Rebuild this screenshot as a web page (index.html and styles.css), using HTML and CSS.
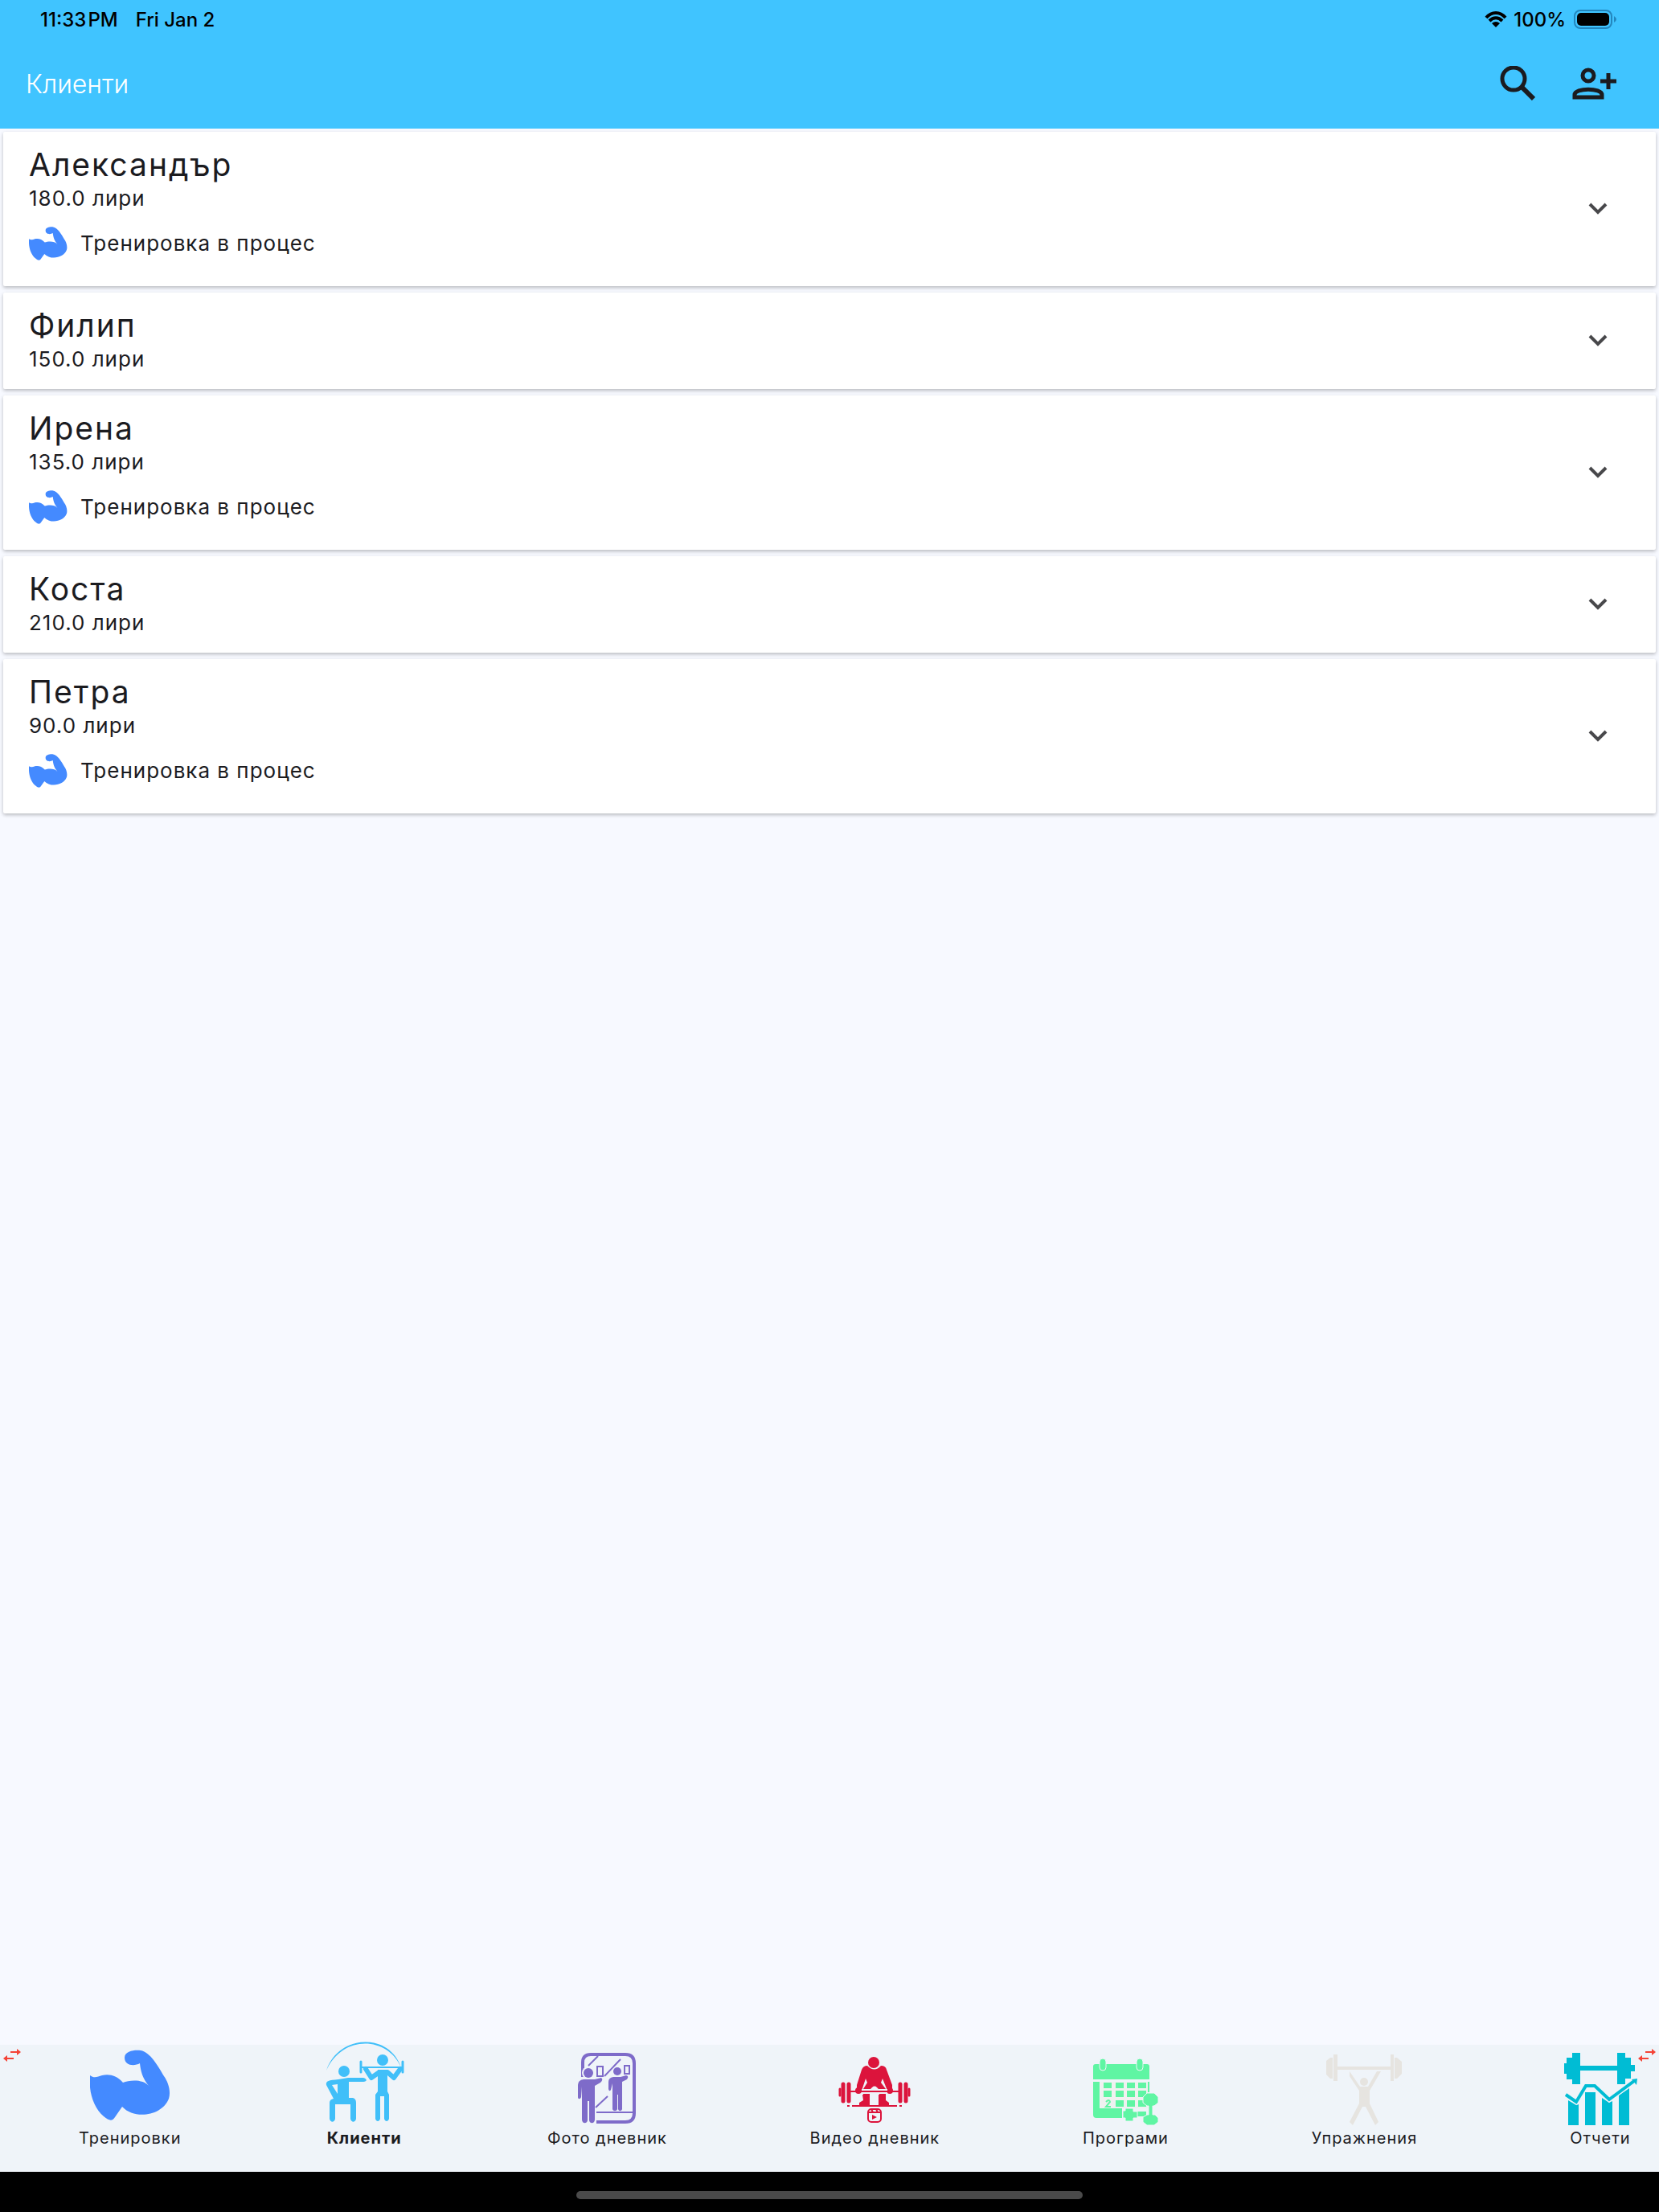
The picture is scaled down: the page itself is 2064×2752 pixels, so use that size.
FILE: index.html
```html
<!DOCTYPE html>
<html lang="bg">
<head>
  <meta charset="UTF-8">
  <meta name="viewport" content="width=device-width, initial-scale=1.0">
  <title>Клиенти</title>
  <link rel="stylesheet" href="styles.css">
</head>
<body>
  <svg class="sprite" aria-hidden="true">
    <symbol id="muscle" viewBox="0 0 100 88">
      <path d="M0 32C5 36 9 34 15 32C24 30 33 32 41 41C49 38 66 36 74 46C65 36 63 26 62 17C55 21 43 20 43 10C43 1 57 0 63 1C75 3 85 21 92 33C97 40 101 51 98 61C90 82 56 88 40 71L31 84C28 89 24 89 17 83C4 72-2 52 0 32Z"/>
    </symbol>
    <symbol id="chevron" viewBox="0 0 24 16">
      <path d="M2 2L12 12L22 2" fill="none" stroke="currentColor" stroke-width="4"/>
    </symbol>
    <symbol id="swap" viewBox="0 0 24 18">
      <path d="M10 5H20M14 13H4" fill="none" stroke="currentColor" stroke-width="2"/>
      <path d="M18 1L23 5L18 9ZM6 9L1 13L6 17Z"/>
    </symbol>
  </svg>

  <header class="header">
    <div class="status">
      <span class="time">11:33&#8202;PM</span>
      <span>Fri Jan 2</span>
      <svg class="wifi" viewBox="0 0 28 20">
        <path d="M2 8C9 0 19 0 26 8M6 12C11 7 17 7 22 12" fill="none" stroke="#000" stroke-width="4"/>
        <path d="M9 15Q14 11 19 15L14 20Z"/>
      </svg>
      <span class="percent">100%</span>
      <svg class="battery" viewBox="0 0 54 24">
        <rect x="1" y="1" width="46" height="22" rx="7" fill="none" stroke="#2386bd" stroke-width="2"/>
        <rect x="4" y="4" width="40" height="16" rx="5"/>
        <path d="M50 8Q56 12 50 16Z" fill="#2386bd"/>
      </svg>
    </div>
    <div class="toolbar">
      <h1>Клиенти</h1>
      <button class="tool" type="button" aria-label="Търсене">
        <svg class="search" viewBox="0 0 44 44">
          <circle cx="17" cy="16" r="14" fill="none" stroke="#1b1b1f" stroke-width="5"/>
          <path d="M28 27L42 41" stroke="#1b1b1f" stroke-width="6"/>
          <path d="M25 28L29 24L33 29L30 32Z"/>
        </svg>
      </button>
      <button class="tool" type="button" aria-label="Добавяне на клиент">
        <svg class="person" viewBox="0 0 56 42">
          <circle cx="20" cy="11" r="7" fill="none" stroke="#1b1b1f" stroke-width="5"/>
          <path d="M3 38V35C3 26 37 26 37 35V38ZM35 18H55M45 8V28" fill="none" stroke="#1b1b1f" stroke-width="5"/>
        </svg>
      </button>
    </div>
  </header>

  <main class="clients">
    <article class="card">
      <div class="info">
        <h2>Александър</h2>
        <p>180.0 лири</p>
        <p class="progress"><svg class="arm"><use href="#muscle"/></svg>Тренировка в процес</p>
      </div>
      <button class="expand" type="button" aria-label="Покажи"><svg><use href="#chevron"/></svg></button>
    </article>
    <article class="card">
      <div class="info">
        <h2>Филип</h2>
        <p>150.0 лири</p>
      </div>
      <button class="expand" type="button" aria-label="Покажи"><svg><use href="#chevron"/></svg></button>
    </article>
    <article class="card">
      <div class="info">
        <h2>Ирена</h2>
        <p>135.0 лири</p>
        <p class="progress"><svg class="arm"><use href="#muscle"/></svg>Тренировка в процес</p>
      </div>
      <button class="expand" type="button" aria-label="Покажи"><svg><use href="#chevron"/></svg></button>
    </article>
    <article class="card">
      <div class="info">
        <h2>Коста</h2>
        <p>210.0 лири</p>
      </div>
      <button class="expand" type="button" aria-label="Покажи"><svg><use href="#chevron"/></svg></button>
    </article>
    <article class="card">
      <div class="info">
        <h2>Петра</h2>
        <p>90.0 лири</p>
        <p class="progress"><svg class="arm"><use href="#muscle"/></svg>Тренировка в процес</p>
      </div>
      <button class="expand" type="button" aria-label="Покажи"><svg><use href="#chevron"/></svg></button>
    </article>
  </main>

  <nav class="tabs">
    <svg class="swap swap-left"><use href="#swap"/></svg>
    <a class="tab" href="#workouts">
      <svg class="blue" viewBox="0 0 100 104"><use href="#muscle" y="6" width="100" height="88"/></svg>
      Тренировки
    </a>
    <a class="tab active" href="#clients">
      <svg class="sky" viewBox="0 0 100 104">
        <path d="M3 32C18-13 81-16 96 28C79-11 23-13 3 32Z"/>
        <circle cx="25" cy="33" r="7"/>
        <circle cx="73" cy="19" r="7"/>
        <path d="M18 43L30 41H49C54 42 54 46 49 46H31V66H36Q40 67 40 72V92C39 97 34 97 33 92V74H14V92C13 97 8 97 7 92V72Q7 68 12 67L3 50C2 45 6 44 18 43ZM10 50L17 61V49Z"/>
        <path d="M46 21V34M98 21V34" stroke="currentColor" stroke-width="3" stroke-linecap="round"/>
        <path d="M47 28H97" stroke="currentColor" stroke-width="2"/>
        <path d="M52 30L59 41L69 34H79L87 41L95 30" fill="none" stroke="currentColor" stroke-width="6" stroke-linejoin="round" stroke-linecap="round"/>
        <path d="M67 31H79V58L81 62V92C80 96 76 96 75 92V64H70V92C69 96 65 96 64 92V62L67 58Z"/>
      </svg>
      Клиенти
    </a>
    <a class="tab" href="#photos">
      <svg class="purple" viewBox="0 0 100 104">
        <path d="M20 40V22Q20 12 30 12H73Q84 12 84 23V85Q84 96 73 96H37" fill="none" stroke="currentColor" stroke-width="4"/>
        <path d="M27 26L39 14M47 39L67 18M36 78L51 64M37 84H82" fill="none" stroke="currentColor" stroke-width="2"/>
        <circle cx="27" cy="35" r="8" fill="#eff4f9"/>
        <path d="M38 27H45V39H38ZM72 26H78V36H72Z" fill="none" stroke="currentColor" stroke-width="2"/>
        <circle cx="27" cy="35" r="6"/>
        <circle cx="63" cy="33" r="5"/>
        <path d="M21 43H35L43 41Q46 43 42 47L35 51V93C35 98 29 99 28 94V70H26V94C25 99 19 98 19 93V52L18 65C17 68 14 68 14 65V50Q14 44 21 43Z"/>
        <path d="M58 40H67L74 38Q78 39 75 43L69 46V80C68 83 65 83 64 80V62H63V80C62 83 58 83 57 80V48L55 56Q53 59 52 55V46Q52 41 58 40Z"/>
      </svg>
      Фото дневник
    </a>
    <a class="tab" href="#videos">
      <svg class="red" viewBox="0 0 100 104">
        <path d="M41 26Q36 26 34 31L28 50V57H34L39 42L41 47L36 55V62L39 68H44V57Q50 46 56 57V68H61L64 62V55L58 47L60 42L66 57H72V50L65 31Q64 26 58 26Q50 35 41 26Z"/>
        <circle cx="49" cy="22" r="7"/>
        <circle cx="30" cy="57" r="4"/>
        <circle cx="69" cy="57" r="4"/>
        <path d="M34 58H66" stroke="#eff4f9" stroke-width="6"/>
        <path d="M19 58H81" stroke="currentColor" stroke-width="2"/>
        <path d="M35 62H44V75H31V72L36 69ZM55 62H64V69L68 72V75H55Z"/>
        <path d="M11 49V70M18 49V70M82 49V70M89 49V70" stroke="currentColor" stroke-width="5" stroke-linecap="round"/>
        <path d="M7 55V63M93 55V63" stroke="currentColor" stroke-width="3" stroke-linecap="round"/>
        <path d="M22 76H78M16 76H19M81 76H84" stroke="currentColor" stroke-width="2"/>
        <rect x="42" y="80" width="16" height="16" rx="4" fill="none" stroke="currentColor" stroke-width="2"/>
        <path d="M43 84H57M46 80L48 84M52 80L54 84" stroke="currentColor" stroke-width="2"/>
        <path d="M47 87L53 90L47 93Z"/>
      </svg>
      Видео дневник
    </a>
    <a class="tab" href="#programs">
      <svg class="green" viewBox="0 3 100 104">
        <path d="M13 27H77Q80 27 80 30V46H10V30Q10 27 13 27Z"/>
        <path d="M10 49H18V82H46V94H14Q10 94 10 90ZM78 49H80V62H78Z"/>
        <path d="M19 49H78V82H19Z" fill="#eff1f0"/>
        <path d="M23 50H33V57H23ZM38 50H48V57H38ZM52 50H62V57H52ZM66 50H76V57H66ZM23 60H33V68H23ZM38 60H48V68H38ZM52 60H62V68H52ZM66 60H76V68H66ZM38 72H48V80H38ZM52 72H62V80H52ZM66 72H76V80H66ZM60 86H76V92H60Z"/>
        <path d="M26 74Q30 70 31 74L26 80H32" fill="none" stroke="currentColor" stroke-width="2"/>
        <g stroke="#eff4f9" stroke-width="1">
          <rect x="18" y="20" width="8" height="15" rx="4"/>
          <rect x="64" y="20" width="8" height="15" rx="4"/>
          <path d="M50 82H60V86H65V94H60V98H50V94H47V85H50Z"/>
          <path d="M77 63H86L91 68V75L86 79H84V90H87L91 94V99L86 103H77L72 99V93L77 90H79V79H77L72 75V68Z"/>
        </g>
      </svg>
      Програми
    </a>
    <a class="tab" href="#exercises">
      <svg class="sand" viewBox="0 3 100 104">
        <path d="M17 30H84V34H17ZM12 15H17V48H12ZM83 15H87V48H83ZM8 19H11V45H8L3 40V23ZM88 19H91L97 24V39L91 45H88Z"/>
        <circle cx="50" cy="49" r="5"/>
        <path d="M32 36L45 55H55L66 36H71L57 60V76L68 99L64 103L52 80H48L36 103L32 99L44 76V60L32 42Z"/>
      </svg>
      Упражнения
    </a>
    <a class="tab" href="#reports">
      <svg class="teal" viewBox="0 3 100 104">
        <path d="M24 29H72V35H24ZM15 13H25V52H15V46H8V39H5V26H8V19H15ZM71 13H81V19H88V28H93V36H88V45H81V52H71Z"/>
        <path d="M10 72L20 78L23 77V103H10ZM31 62H44V103H31ZM52 69L61 75L65 73V103H52ZM73 66L86 57V103H73Z"/>
        <path d="M7 65L20 74L32 54H43L61 71L92 48" fill="none" stroke="#eff4f9" stroke-width="6"/>
        <path d="M7 65L20 74L32 54H43L61 71L92 48" fill="none" stroke="currentColor" stroke-width="4"/>
        <path d="M89 46L96 45L95 53Z"/>
      </svg>
      Отчети
    </a>
    <svg class="swap swap-right"><use href="#swap"/></svg>
  </nav>
  <footer class="home"><span></span></footer>
</body>
</html>
```
FILE: styles.css
```css
* {
  box-sizing: border-box;
}

body {
  margin: 0;
  min-height: 100vh;
  display: flex;
  flex-direction: column;
  background: #f7f9ff;
  color: #1b1b1f;
  font-family: Inter, "Noto Sans", sans-serif;
}

h1,
h2,
p {
  margin: 0;
  font-weight: 400;
}

button {
  border: 0;
  padding: 0;
  background: none;
  color: inherit;
}

svg {
  display: block;
  fill: currentColor;
}

.sprite {
  position: absolute;
  width: 0;
  height: 0;
}

.header {
  background: #40c4ff;
}

.status {
  display: flex;
  align-items: center;
  height: 48px;
  padding: 0 52px 0 50px;
  color: #000;
  font-size: 24px;
  font-weight: 500;
}

.time {
  margin-right: 22px;
}

.wifi {
  width: 28px;
  height: 20px;
  margin-left: auto;
}

.percent {
  margin: 0 10px 0 8px;
}

.battery {
  width: 54px;
  height: 24px;
}

.toolbar {
  display: flex;
  align-items: center;
  height: 112px;
  padding: 0 32px;
}

.toolbar h1 {
  flex: 1;
  color: #fff;
  font-size: 32px;
  font-weight: 300;
}

.tool {
  display: flex;
  align-items: center;
  justify-content: center;
  width: 96px;
  height: 96px;
}

.search {
  width: 44px;
  height: 44px;
}

.person {
  width: 56px;
  height: 42px;
}

.clients {
  flex: 1;
  display: flex;
  flex-direction: column;
  gap: 8px;
  padding: 4px;
}

.card {
  display: flex;
  align-items: center;
  justify-content: space-between;
  padding: 0 60px 0 32px;
  background: #fff;
  border-radius: 2px;
  box-shadow: 0 2px 4px rgba(0, 0, 0, 0.25);
}

.info {
  padding: 16px 0 20px;
}

.card h2 {
  font-size: 39px;
  line-height: 50px;
  letter-spacing: 2px;
}

.card p {
  font-size: 26px;
  line-height: 34px;
  letter-spacing: 1px;
}

.card .progress {
  display: flex;
  align-items: center;
  gap: 16px;
  height: 48px;
  margin: 15px 0 9px;
}

.arm {
  width: 48px;
  height: 42px;
  color: #448aff;
}

.expand {
  color: #48484b;
}

.expand svg {
  width: 24px;
  height: 16px;
}

.tabs {
  position: relative;
  display: flex;
  justify-content: space-between;
  height: 158px;
  padding: 0 23px 0 98px;
  background: #eff4f9;
}

.tab {
  display: flex;
  flex-direction: column;
  align-items: center;
  min-width: 100px;
  color: #1b1b1f;
  font-size: 20px;
  line-height: 24px;
  letter-spacing: 1px;
  white-space: nowrap;
  text-decoration: none;
}

.tab svg {
  width: 100px;
  height: 104px;
  overflow: visible;
}

.active {
  font-weight: 700;
}

.blue {
  color: #448aff;
}

.sky {
  color: #40bff9;
}

.purple {
  color: #7e6bc9;
}

.red {
  color: #dc143c;
}

.green {
  color: #5ff5a3;
}

.sand {
  color: #e6e4e0;
}

.teal {
  color: #00bcd4;
}

.swap {
  position: absolute;
  top: 4px;
  width: 24px;
  height: 18px;
  color: #f44336;
}

.swap-left {
  left: 3px;
}

.swap-right {
  right: 3px;
}

.home {
  display: flex;
  align-items: center;
  justify-content: center;
  height: 50px;
  padding-top: 8px;
  background: #000;
}

.home span {
  width: 630px;
  max-width: 60%;
  height: 10px;
  border-radius: 5px;
  background: #4a4a4a;
}
```
